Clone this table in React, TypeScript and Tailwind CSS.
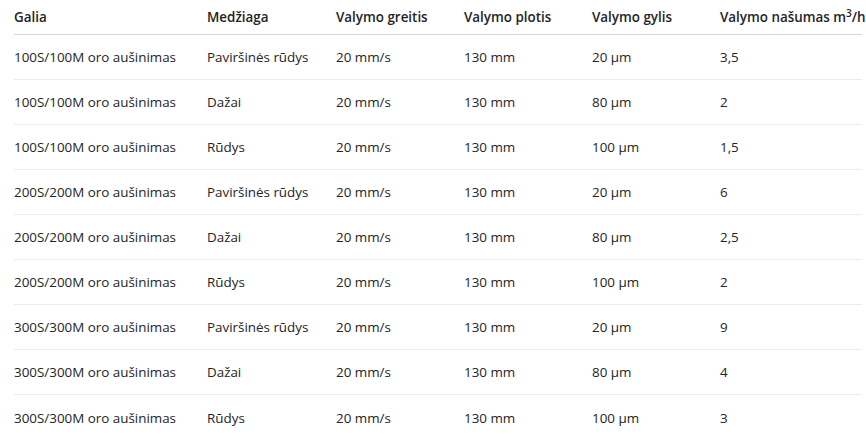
import React from "react";

const rows: string[][] = [
  ["100S/100M oro aušinimas", "Paviršinės rūdys", "20 mm/s", "130 mm", "20 µm", "3,5"],
  ["100S/100M oro aušinimas", "Dažai", "20 mm/s", "130 mm", "80 µm", "2"],
  ["100S/100M oro aušinimas", "Rūdys", "20 mm/s", "130 mm", "100 µm", "1,5"],
  ["200S/200M oro aušinimas", "Paviršinės rūdys", "20 mm/s", "130 mm", "20 µm", "6"],
  ["200S/200M oro aušinimas", "Dažai", "20 mm/s", "130 mm", "80 µm", "2,5"],
  ["200S/200M oro aušinimas", "Rūdys", "20 mm/s", "130 mm", "100 µm", "2"],
  ["300S/300M oro aušinimas", "Paviršinės rūdys", "20 mm/s", "130 mm", "20 µm", "9"],
  ["300S/300M oro aušinimas", "Dažai", "20 mm/s", "130 mm", "80 µm", "4"],
  ["300S/300M oro aušinimas", "Rūdys", "20 mm/s", "130 mm", "100 µm", "3"],
];

const widths = ["w-[193px]", "w-[129px]", "w-[128px]", "w-[128px]", "w-[128px]", "w-[142px]"];

export default function App() {
  return (
    <div
      className="w-[866px] h-[447px] overflow-hidden bg-white text-[#242424] pl-[14px]"
      style={{ fontFamily: '"Open Sans", "Noto Sans", sans-serif' }}
    >
      <table className="border-collapse text-[13.4px] table-fixed w-[848px]">
        <thead>
          <tr className="h-[34px] border-b border-[#d6d6d6]">
            {["Galia", "Medžiaga", "Valymo greitis", "Valymo plotis", "Valymo gylis"].map((h, i) => (
              <th key={h} className={`${widths[i]} text-left font-semibold p-0 pt-[1px] align-middle whitespace-nowrap`}>
                {h}
              </th>
            ))}
            <th className={`${widths[5]} text-left font-semibold p-0 pt-[1px] align-middle whitespace-nowrap`}>
              Valymo našumas m<sup className="text-[10px]">3</sup>/h
            </th>
          </tr>
        </thead>
        <tbody>
          {rows.map((r, i) => (
            <tr key={i} className={`h-[45px] ${i < rows.length - 1 ? "border-b border-[#ececec]" : ""}`}>
              {r.map((c, j) => (
                <td key={j} className="p-0 pt-[2px] align-middle whitespace-nowrap">
                  {c}
                </td>
              ))}
            </tr>
          ))}
        </tbody>
      </table>
    </div>
  );
}
